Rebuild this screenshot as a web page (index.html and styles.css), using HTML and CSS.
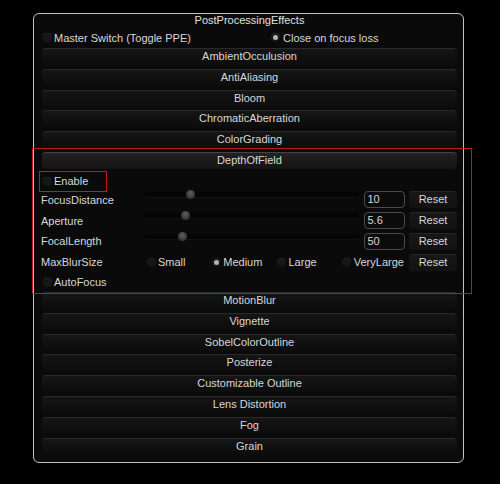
FILE: index.html
```html
<!DOCTYPE html>
<html>
<head>
<meta charset="utf-8">
<link rel="stylesheet" href="styles.css">
</head>
<body>
<div class="window">
  <div class="title">PostProcessingEffects</div>
  <div class="master">
    <div class="opt opt-master"><span class="check"></span>Master Switch (Toggle PPE)</div>
    <div class="opt"><span class="radio on"></span>Close on focus loss</div>
  </div>
  <div class="bar">AmbientOcculusion</div>
  <div class="bar">AntiAliasing</div>
  <div class="bar">Bloom</div>
  <div class="bar">ChromaticAberration</div>
  <div class="bar">ColorGrading</div>
  <div class="bar bar-open">DepthOfField</div>
  <div class="section">
    <div class="row-enable"><span class="check"></span>Enable</div>
    <div class="param">
      <span class="label">FocusDistance</span>
      <div class="slider"><span class="knob" style="left:42px"></span></div>
      <div class="field">10</div>
      <div class="btn">Reset</div>
    </div>
    <div class="param">
      <span class="label">Aperture</span>
      <div class="slider"><span class="knob" style="left:37px"></span></div>
      <div class="field">5.6</div>
      <div class="btn">Reset</div>
    </div>
    <div class="param">
      <span class="label">FocalLength</span>
      <div class="slider"><span class="knob" style="left:34px"></span></div>
      <div class="field">50</div>
      <div class="btn">Reset</div>
    </div>
    <div class="param">
      <span class="label">MaxBlurSize</span>
      <div class="choices">
        <div class="choice"><span class="radio"></span>Small</div>
        <div class="choice"><span class="radio on"></span>Medium</div>
        <div class="choice"><span class="radio"></span>Large</div>
        <div class="choice"><span class="radio"></span>VeryLarge</div>
      </div>
      <div class="btn">Reset</div>
    </div>
    <div class="row-auto"><span class="check"></span>AutoFocus</div>
  </div>
  <div class="bar">MotionBlur</div>
  <div class="bar">Vignette</div>
  <div class="bar">SobelColorOutline</div>
  <div class="bar">Posterize</div>
  <div class="bar">Customizable Outline</div>
  <div class="bar">Lens Distortion</div>
  <div class="bar">Fog</div>
  <div class="bar">Grain</div>
</div>
<div class="mark mark-section"></div>
<div class="mark mark-enable"></div>
</body>
</html>
```
FILE: styles.css
```css
html, body {
  margin: 0;
  background: #000;
}
body {
  font-family: "Liberation Sans", Arial, sans-serif;
  font-size: 11px;
  color: #d8d8d8;
  width: 500px;
  height: 484px;
  overflow: hidden;
}
.window {
  box-sizing: border-box;
  width: 431px;
  height: 450px;
  margin: 13px 0 0 33px;
  border: 1px solid #c2c2c2;
  border-radius: 6px;
  background: #0a0a0a;
  padding: 0 6px 0 8px;
}
.title {
  height: 13px;
  line-height: 13px;
  text-align: center;
  color: #e0e0e0;
}
.master {
  display: flex;
  align-items: center;
  height: 21px;
}
.opt {
  display: flex;
  align-items: center;
}
.opt-master {
  width: 229px;
}
.check {
  display: inline-block;
  width: 9px;
  height: 9px;
  border-radius: 4px;
  background: #161616;
  box-shadow: inset 0 1px 0 #252525;
  margin: 0 2px 0 1px;
  flex: none;
}
.radio {
  position: relative;
  display: inline-block;
  width: 9px;
  height: 9px;
  border-radius: 50%;
  background: #161616;
  box-shadow: inset 0 1px 0 #252525;
  margin-right: 3px;
  flex: none;
}
.radio.on::after {
  content: "";
  position: absolute;
  left: 2px;
  top: 2px;
  width: 5px;
  height: 5px;
  border-radius: 50%;
  background: #b4b4b4;
}
.bar {
  box-sizing: border-box;
  height: 17px;
  line-height: 15px;
  margin-bottom: 3.8px;
  text-align: center;
  border-radius: 4px;
  border-top: 1px solid #2a2a2a;
  background: linear-gradient(#161616, #0f0f0f 60%, #0d0d0d);
}
.bar-open {
  border-top-color: #444;
  background: linear-gradient(#222, #181818 60%, #151515);
}
.section {
  display: flex;
  flex-direction: column;
}
.row-enable {
  display: flex;
  align-items: center;
  height: 16.6px;
}
.row-auto {
  display: flex;
  align-items: center;
  height: 19.4px;
}
.param {
  display: grid;
  grid-template-columns: 97px 1fr 41px 48px;
  column-gap: 4.5px;
  align-items: center;
  height: 20.8px;
}
.label {
  margin-left: -1px;
}
.slider {
  position: relative;
  align-self: start;
  margin-top: 3px;
  height: 5px;
  border-radius: 3px;
  background: #050505;
  box-shadow: 0 1px 0 #121212;
}
.knob {
  position: absolute;
  top: -2px;
  width: 9px;
  height: 9px;
  border-radius: 50%;
  background: radial-gradient(circle at 50% 35%, #5c5c5c, #3a3a3a 60%, #2a2a2a);
}
.field {
  box-sizing: border-box;
  height: 17px;
  line-height: 15px;
  border: 1px solid #4a4a4a;
  border-radius: 4px;
  background: #0b0b0b;
  padding-left: 3px;
}
.btn {
  box-sizing: border-box;
  height: 17px;
  line-height: 15px;
  text-align: center;
  border-radius: 3px;
  border-top: 1px solid #262626;
  background: linear-gradient(#171717, #121212);
}
.choices {
  grid-column: 2 / 4;
  display: grid;
  grid-template-columns: repeat(4, 1fr);
}
.choice {
  display: flex;
  align-items: center;
  padding-left: 3px;
}
.choice .radio {
  margin-right: 2.5px;
}
.mark {
  position: absolute;
  box-sizing: border-box;
  border: 1px solid #c8161c;
}
.mark-section {
  left: 32px;
  top: 148px;
  width: 440px;
  height: 146px;
}
.mark-enable {
  left: 39px;
  top: 171px;
  width: 68px;
  height: 21px;
}
```
